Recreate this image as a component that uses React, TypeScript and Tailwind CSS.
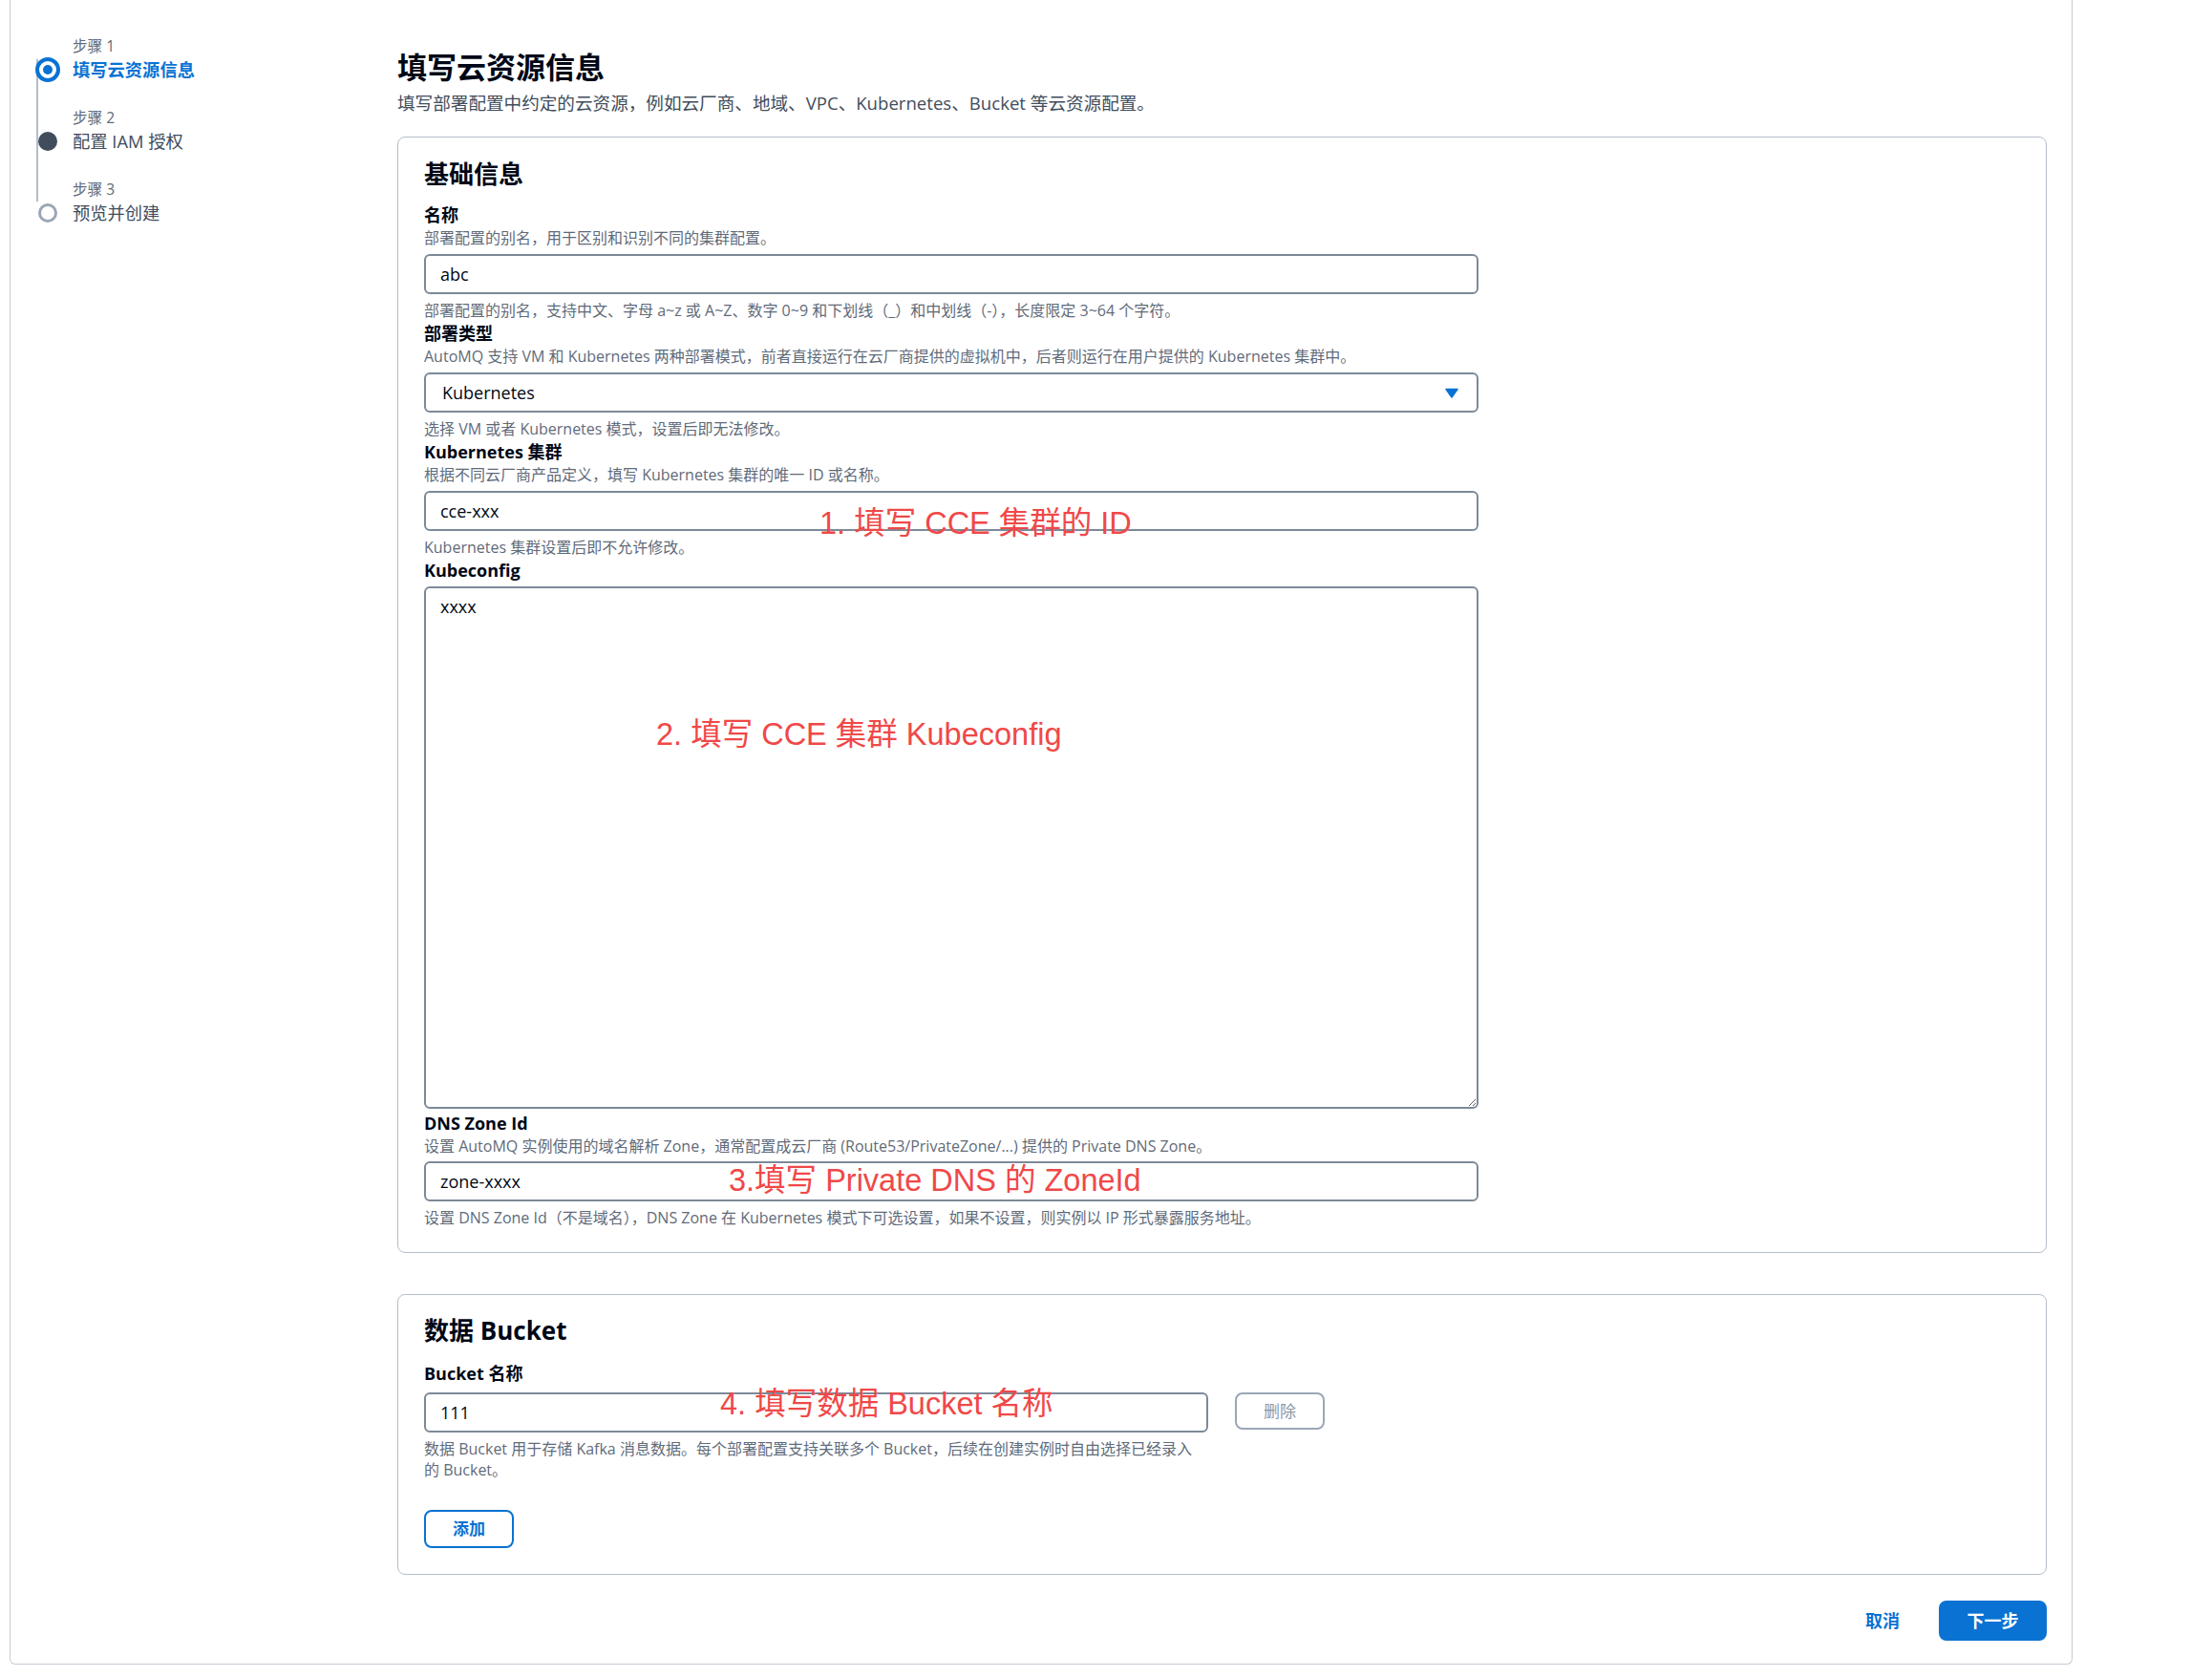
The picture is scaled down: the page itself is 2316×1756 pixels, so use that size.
import React from "react";

const font = { fontFamily: '"Open Sans", "Noto Sans CJK SC", sans-serif' };

function Label({ children }: { children: React.ReactNode }) {
  return <div className="text-[18px] leading-[26px] font-bold text-[#000716]">{children}</div>;
}

function Desc({ children }: { children: React.ReactNode }) {
  return <div className="text-[16px] leading-[22px] text-[#5f6b7a]">{children}</div>;
}

function Note({ text, className }: { text: string; className: string }) {
  // red annotation drawn on top of the screenshot
  return (
    <span
      className={`absolute whitespace-nowrap text-[32.5px] leading-[36px] text-[#f04848] pointer-events-none ${className}`}
      style={{ fontFamily: '"Liberation Sans", "Noto Sans CJK SC", sans-serif' }}
    >
      {text}
    </span>
  );
}

function TextInput({ value, width = "w-[1104px]" }: { value: string; width?: string }) {
  return (
    <input
      defaultValue={value}
      className={`${width} h-[42px] px-[15px] border-2 border-[#7d8998] rounded-[6px] text-[18px] text-[#000716] outline-none bg-white`}
    />
  );
}

function Step({ num, title, state }: { num: number; title: string; state: "active" | "done" | "todo" }) {
  return (
    <div className="flex flex-col">
      <div className="pl-[65px] text-[15.6px] leading-[22px] text-[#5f6b7a]">步骤 {num}</div>
      <div className="flex items-center h-[28px]">
        <div className="ml-[26px] w-[26px] flex items-center justify-center">
          {state === "active" && (
            <div className="w-[26px] h-[26px] rounded-full border-[4px] border-[#0972d3] bg-white flex items-center justify-center">
              <div className="w-[10px] h-[10px] rounded-full bg-[#0972d3]" />
            </div>
          )}
          {state === "done" && <div className="w-[20px] h-[20px] rounded-full bg-[#414d5c]" />}
          {state === "todo" && <div className="w-[20px] h-[20px] rounded-full border-[3px] border-[#9ba7b6] bg-white" />}
        </div>
        <span
          className={`ml-[13px] text-[18.3px] ${
            state === "active" ? "font-bold text-[#0972d3]" : "text-[#414d5c]"
          }`}
        >
          {title}
        </span>
      </div>
    </div>
  );
}

export default function App() {
  return (
    <div className="w-[2316px] h-[1756px] bg-white pl-[10px]" style={font}>
      <div className="w-[2160px] h-[1743px] border-l border-r border-b border-[#c6cdd5] rounded-b-[6px] flex">
        {/* Steps */}
        <aside className="w-[405px] shrink-0 relative pt-[37px]">
          <div className="absolute left-[27px] top-[62px] w-[2px] h-[149px] bg-[#b4bdc7]" />
          <div className="relative flex flex-col gap-[25px]">
            <Step num={1} title="填写云资源信息" state="active" />
            <Step num={2} title="配置 IAM 授权" state="done" />
            <Step num={3} title="预览并创建" state="todo" />
          </div>
        </aside>

        <main className="flex-1 pr-[26px] pt-[50px] pb-[26px] flex flex-col">
          <h1 className="text-[31px] leading-[40px] font-bold text-[#000716]">填写云资源信息</h1>
          <p className="mt-[5px] text-[18.6px] leading-[26px] text-[#414d5c]">
            填写部署配置中约定的云资源，例如云厂商、地域、VPC、Kubernetes、Bucket 等云资源配置。
          </p>

          {/* 基础信息 */}
          <section className="mt-[22px] border border-[#b6bec9] rounded-[8px] pl-[27px] pr-[27px] pt-[21px] pb-[25px]">
            <h2 className="text-[26px] leading-[34px] font-bold text-[#000716] mb-[13px]">基础信息</h2>

            <Label>名称</Label>
            <Desc>部署配置的别名，用于区别和识别不同的集群配置。</Desc>
            <div className="mt-[6px]">
              <TextInput value="abc" />
            </div>
            <div className="mt-[6px]">
              <Desc>部署配置的别名，支持中文、字母 a~z 或 A~Z、数字 0~9 和下划线（_）和中划线（-），长度限定 3~64 个字符。</Desc>
            </div>

            <Label>部署类型</Label>
            <Desc>AutoMQ 支持 VM 和 Kubernetes 两种部署模式，前者直接运行在云厂商提供的虚拟机中，后者则运行在用户提供的 Kubernetes 集群中。</Desc>
            <div className="mt-[6px] w-[1104px] h-[42px] pl-[17px] pr-[19px] border-2 border-[#7d8998] rounded-[6px] flex items-center justify-between">
              <span className="text-[18px] text-[#000716]">Kubernetes</span>
              <svg width="14" height="11" viewBox="0 0 14 11">
                <path d="M1 1.5 L13 1.5 L7 10 Z" fill="#0972d3" stroke="#0972d3" strokeWidth="1.5" strokeLinejoin="round" />
              </svg>
            </div>
            <div className="mt-[6px]">
              <Desc>选择 VM 或者 Kubernetes 模式，设置后即无法修改。</Desc>
            </div>

            <Label>Kubernetes 集群</Label>
            <Desc>根据不同云厂商产品定义，填写 Kubernetes 集群的唯一 ID 或名称。</Desc>
            <div className="mt-[6px] relative w-[1104px]">
              <TextInput value="cce-xxx" />
              <Note text="1. 填写 CCE 集群的 ID" className="left-[414px] top-[16px]" />
            </div>
            <div className="mt-[6px]">
              <Desc>Kubernetes 集群设置后即不允许修改。</Desc>
            </div>

            <Label>Kubeconfig</Label>
            <div className="mt-[4px] relative w-[1104px]">
              <textarea
                defaultValue="xxxx"
                className="block w-[1104px] h-[547px] px-[15px] py-[6px] border-2 border-[#7d8998] rounded-[6px] text-[18px] leading-[26px] text-[#000716] outline-none"
              />
              <Note text="2. 填写 CCE 集群 Kubeconfig" className="left-[243px] top-[137px]" />
            </div>

            <div className="mt-[2px]">
              <Label>DNS Zone Id</Label>
            </div>
            <Desc>设置 AutoMQ 实例使用的域名解析 Zone，通常配置成云厂商 (Route53/PrivateZone/...) 提供的 Private DNS Zone。</Desc>
            <div className="mt-[5px] relative w-[1104px]">
              <TextInput value="zone-xxxx" />
              <Note text="3.填写 Private DNS 的 ZoneId" className="left-[319px] top-[2px]" />
            </div>
            <div className="mt-[6px]">
              <Desc>设置 DNS Zone Id（不是域名），DNS Zone 在 Kubernetes 模式下可选设置，如果不设置，则实例以 IP 形式暴露服务地址。</Desc>
            </div>
          </section>

          {/* 数据 Bucket */}
          <section className="mt-[43px] border border-[#b6bec9] rounded-[8px] pl-[27px] pr-[27px] pt-[20px] pb-[27px]">
            <h2 className="text-[26px] leading-[34px] font-bold text-[#000716] mb-[15px]">数据 Bucket</h2>
            <Label>Bucket 名称</Label>
            <div className="mt-[7px] flex items-start gap-[28px]">
              <div className="w-[821px]">
                <div className="relative">
                  <TextInput value="111" width="w-[821px]" />
                  <Note text="4. 填写数据 Bucket 名称" className="left-[310px] top-[-6px]" />
                </div>
                <div className="mt-[6px] w-[810px]">
                  <Desc>数据 Bucket 用于存储 Kafka 消息数据。每个部署配置支持关联多个 Bucket，后续在创建实例时自由选择已经录入的 Bucket。</Desc>
                </div>
              </div>
              <button className="w-[94px] h-[39px] border-2 border-[#9ba7b6] rounded-[8px] text-[17px] text-[#8d99a8] bg-white">
                删除
              </button>
            </div>
            <button className="mt-[31px] w-[94px] h-[40px] border-2 border-[#0972d3] rounded-[8px] text-[17px] font-bold text-[#0972d3] bg-white">
              添加
            </button>
          </section>

          <div className="mt-[27px] flex justify-end items-center gap-[21px]">
            <button className="px-[20px] h-[42px] text-[18px] font-bold text-[#0972d3]">取消</button>
            <button className="w-[113px] h-[42px] rounded-[8px] bg-[#0972d3] text-[18px] font-bold text-white">下一步</button>
          </div>
        </main>
      </div>
    </div>
  );
}
